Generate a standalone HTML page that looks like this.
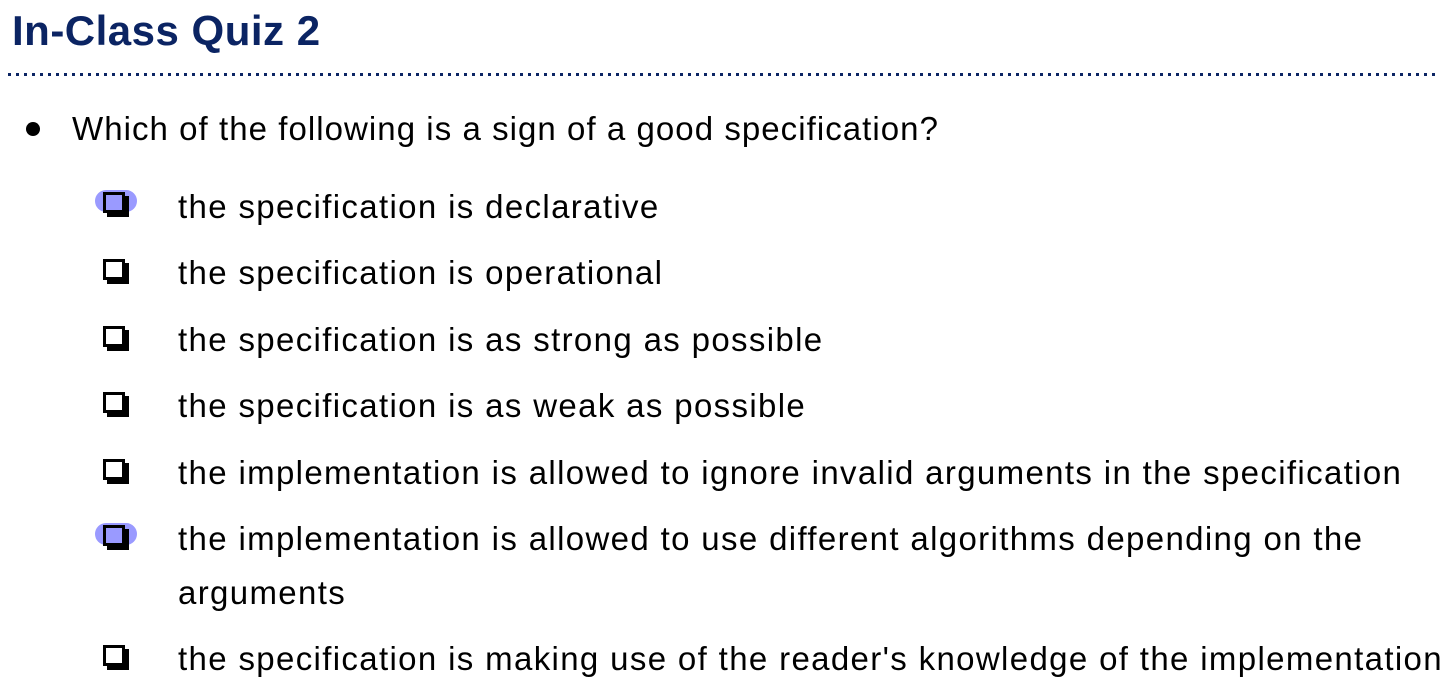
<!DOCTYPE html><html><head><style>
body{margin:0;width:1456px;height:696px;background:#fff;position:relative;overflow:hidden;font-family:"Liberation Sans",sans-serif;}
.t{position:absolute;white-space:nowrap;color:#000;font-size:33px;line-height:36px;letter-spacing:1.35px}
h1{position:absolute;left:12px;top:6px;margin:0;font-size:42px;font-weight:bold;color:#0b2463;line-height:50px;letter-spacing:0.5px}
.dots{position:absolute;left:8px;top:73px;width:1430px;height:3px;background:repeating-linear-gradient(90deg,#0b2463 0 3px,transparent 3px 8px);}
.cb{position:absolute;left:103px;width:16px;height:15px;border:3px solid #000;box-shadow:4px 4px 0 #000;background:transparent}
.hl{position:absolute;left:95px;width:42px;height:22px;border-radius:11px;background:#9a9aff;}
.bul{position:absolute;left:26px;top:122px;width:14px;height:14px;border-radius:50%;background:#000}
</style></head><body>
<h1>In-Class Quiz 2</h1>
<div class="dots"></div>
<div class="bul"></div>
<div class="t" style="left:72px;top:111px;letter-spacing:1.05px">Which of the following is a sign of a good specification?</div>
<div class="hl" style="top:190px"></div>
<div class="cb" style="top:192px"></div>
<div class="t" style="left:178px;top:189px">the specification is declarative</div>
<div class="cb" style="top:259px"></div>
<div class="t" style="left:178px;top:255px">the specification is operational</div>
<div class="cb" style="top:326px"></div>
<div class="t" style="left:178px;top:322px">the specification is as strong as possible</div>
<div class="cb" style="top:392px"></div>
<div class="t" style="left:178px;top:388px">the specification is as weak as possible</div>
<div class="cb" style="top:459px"></div>
<div class="t" style="left:178px;top:455px">the implementation is allowed to ignore invalid arguments in the specification</div>
<div class="hl" style="top:523px"></div>
<div class="cb" style="top:525px"></div>
<div class="t" style="left:178px;top:521px">the implementation is allowed to use different algorithms depending on the</div>
<div class="t" style="left:178px;top:575px">arguments</div>
<div class="cb" style="top:645px"></div>
<div class="t" style="left:178px;top:641px">the specification is making use of the reader's knowledge of the implementation</div>
</body></html>
